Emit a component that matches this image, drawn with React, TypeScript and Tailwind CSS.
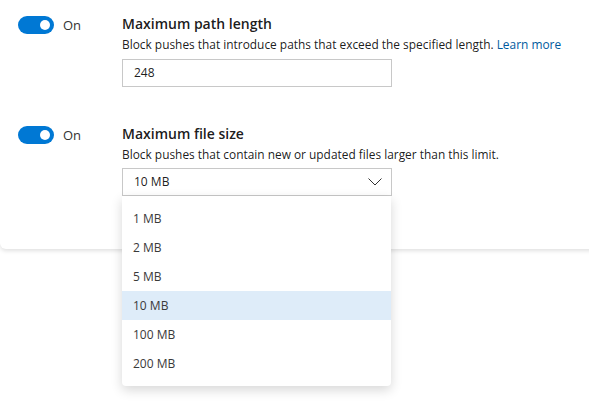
import { useState } from 'react';

const OPTIONS = ['1 MB', '2 MB', '5 MB', '10 MB', '100 MB', '200 MB'];

function Toggle({ on }: { on: boolean }) {
  return (
    <div className="flex items-center gap-[9px]">
      <div className={'relative h-[18px] w-[36px] rounded-full ' + (on ? 'bg-[#0078d4]' : 'bg-white border border-[#666]')}>
        <span className="absolute right-[4px] top-[4px] h-[10px] w-[10px] rounded-full bg-white" />
      </div>
      <span className="text-[13px] leading-[18px] text-[#333]">{on ? 'On' : 'Off'}</span>
    </div>
  );
}

function Chevron() {
  return (
    <svg width="14" height="8" viewBox="0 0 14 8" fill="none">
      <path d="M0.5 0.5 L7 7 L13.5 0.5" stroke="#333" strokeWidth="1" />
    </svg>
  );
}

export default function App() {
  const [selected] = useState('10 MB');

  return (
    <div className="relative h-[420px] w-[589px] overflow-hidden bg-white text-[rgba(0,0,0,0.9)]" style={{ fontFamily: '"Open Sans", "Noto Sans", sans-serif' }}>
      <div className="h-[249px] w-[600px] rounded-bl-md bg-white shadow-[0_2px_4px_rgba(0,0,0,0.12)]">
        {/* path length */}
        <div className="flex pl-[18px] pt-[14px]">
          <div className="w-[104px] pt-[2px]">
            <Toggle on />
          </div>
          <div className="flex flex-col">
            <div className="text-[14px] font-semibold leading-[20px]">Maximum path length</div>
            <div className="text-[11.9px] leading-[18px] mt-[1px]">
              Block pushes that introduce paths that exceed the specified length.{' '}
              <span className="text-[#005a9e]">Learn more</span>
            </div>
            <div className="mt-[6px] flex h-[28px] w-[270px] items-center border border-[#c8c8c8] px-[11px] text-[12px]">248</div>
          </div>
        </div>

        {/* file size */}
        <div className="flex pl-[18px] pt-[37px]">
          <div className="w-[104px] pt-[2px]">
            <Toggle on />
          </div>
          <div className="relative flex flex-col">
            <div className="text-[14px] font-semibold leading-[20px]">Maximum file size</div>
            <div className="text-[11.9px] leading-[18px] mt-[1px]">Block pushes that contain new or updated files larger than this limit.</div>
            <div className="mt-[5px] flex h-[28px] w-[270px] items-center justify-between border border-[#c8c8c8] pl-[11px] pr-[9px] text-[12px]">
              <span>{selected}</span>
              <Chevron />
            </div>
          </div>
        </div>
      </div>

      <div className="absolute left-[122px] top-[196px] w-[269px] rounded-b-[4px] bg-white py-[8px] shadow-[0_4px_12px_rgba(0,0,0,0.16)]">
        {OPTIONS.map(o => (
          <div key={o} className={'flex h-[29px] items-center px-[11px] text-[12px] text-[#3a3a3a] ' + (o === selected ? 'bg-[#deecf9]' : '')}>
            {o}
          </div>
        ))}
      </div>
    </div>
  );
}
